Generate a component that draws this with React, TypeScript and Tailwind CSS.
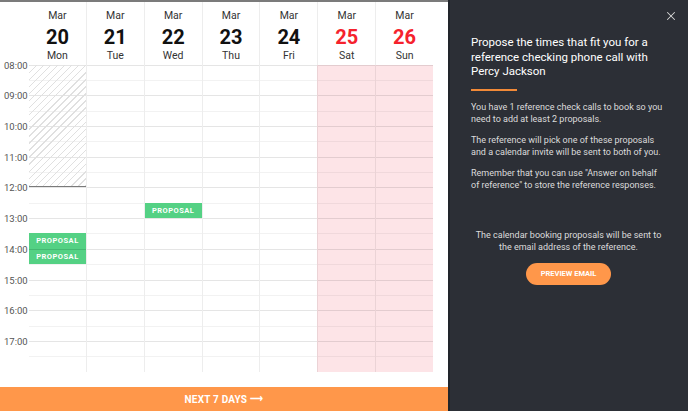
import React from 'react';
import { X } from 'lucide-react';

const days = [
  { month: 'Mar', date: 20, name: 'Mon', weekend: false },
  { month: 'Mar', date: 21, name: 'Tue', weekend: false },
  { month: 'Mar', date: 22, name: 'Wed', weekend: false },
  { month: 'Mar', date: 23, name: 'Thu', weekend: false },
  { month: 'Mar', date: 24, name: 'Fri', weekend: false },
  { month: 'Mar', date: 25, name: 'Sat', weekend: true },
  { month: 'Mar', date: 26, name: 'Sun', weekend: true },
];

const hours = ['08:00', '09:00', '10:00', '11:00', '12:00', '13:00', '14:00', '15:00', '16:00', '17:00'];

const Proposal: React.FC<{ className?: string }> = ({ className = '' }) => (
  <div
    className={`h-[15.36px] bg-[#54d184] flex items-center justify-center text-white font-bold text-[7.5px] tracking-[0.5px] ${className}`}
  >
    PROPOSAL
  </div>
);

const DayColumn: React.FC<{ index: number; weekend: boolean }> = ({ index, weekend }) => (
  <div
    className={`relative flex-1 flex flex-col ${index > 0 ? 'border-l border-black/[0.07]' : ''} ${
      weekend ? 'bg-[#fde4e7]' : 'bg-white'
    }`}
  >
    {Array.from({ length: 20 }).map((_, r) => (
      <div
        key={r}
        className={`flex-1 border-t ${r % 2 === 0 ? 'border-black/[0.1]' : 'border-black/[0.05]'}`}
      />
    ))}

    {index === 0 && (
      <>
        {/* unavailable morning */}
        <div className="absolute left-0 right-0 top-0 h-[122.9px] bg-[repeating-linear-gradient(135deg,#e0e0e0_0px,#e0e0e0_1px,transparent_1px,transparent_5px)] border-b border-[#7a7a7a]" />
        <div className="absolute left-0 right-0 top-[168.9px] flex flex-col">
          <Proposal />
          <Proposal className="border-t border-[#45b872]" />
        </div>
      </>
    )}
    {index === 2 && (
      <div className="absolute left-0 right-0 top-[138.2px]">
        <Proposal />
      </div>
    )}
  </div>
);

export default function App() {
  return (
    <div className="w-[688px] h-[411px] flex overflow-hidden font-[Roboto,'Liberation_Sans',sans-serif]">
      {/* calendar side */}
      <div className="w-[448px] h-full flex flex-col bg-white border-t-2 border-[#7b7b7b]">
        <div className="h-[62.5px] flex pl-[29px] pr-[15px]">
          {days.map((d, i) => (
            <div
              key={d.date}
              className={`flex-1 flex flex-col items-center pt-[7px] ${i > 0 ? 'border-l border-black/[0.07]' : ''}`}
            >
              <span className="text-[10.5px] leading-[14px] text-[#333]">{d.month}</span>
              <span
                className={`text-[20px] leading-[22px] font-bold mt-[3px] ${d.weekend ? 'text-[#f5222d]' : 'text-[#111]'}`}
              >
                {d.date}
              </span>
              <span className="text-[10.5px] leading-[14px] text-[#333] mt-[1px]">{d.name}</span>
            </div>
          ))}
        </div>

        <div className="h-[307.2px] flex pr-[15px]">
          <div className="w-[29px] flex flex-col">
            {hours.map((h) => (
              <div key={h} className="flex-1">
                <span className="block -translate-y-1/2 text-[9.5px] leading-[12px] text-[#555] pl-[4px] pt-[1px]">
                  {h}
                </span>
              </div>
            ))}
          </div>
          <div className="flex-1 flex">
            {days.map((d, i) => (
              <DayColumn key={d.date} index={i} weekend={d.weekend} />
            ))}
          </div>
        </div>

        <div className="flex-1" />

        <button className="h-[24px] w-full bg-[#ff974a] text-white font-bold text-[10px] flex items-center justify-center gap-[3px] tracking-[0.2px]">
          NEXT 7 DAYS <span className="text-[9px]">⟶</span>
        </button>
      </div>

      {/* instructions side */}
      <div className="relative flex-1 h-full bg-[#2c2f36] border-l-2 border-[#22252b] pl-[21px] pr-[22px] pt-[35px]">
        <X className="absolute top-[9px] right-[10px] w-[14px] h-[14px] text-[#d8d8d8]" strokeWidth={1.75} />

        <h2 className="text-[11.5px] leading-[14.5px] text-white font-normal">
          Propose the times that fit you for a reference checking phone call with Percy Jackson
        </h2>
        <div className="w-[46px] h-[2px] bg-[#f28a38] mt-[10px]" />

        <p className="mt-[10px] text-[9px] leading-[12px] text-[#dcdcdc]">
          You have 1 reference check calls to book so you need to add at least 2 proposals.
        </p>
        <p className="mt-[9px] text-[9px] leading-[12px] text-[#dcdcdc]">
          The reference will pick one of these proposals and a calendar invite will be sent to both of you.
        </p>
        <p className="mt-[9px] text-[9px] leading-[12px] text-[#dcdcdc]">
          Remember that you can use "Answer on behalf of reference" to store the reference responses.
        </p>

        <p className="mt-[38px] text-[9px] leading-[12.5px] text-[#dcdcdc] text-center px-[4px]">
          The calendar booking proposals will be sent to the email address of the reference.
        </p>
        <div className="flex justify-center mt-[9px]">
          <button className="w-[85px] h-[22.5px] rounded-full bg-[#ff974a] text-white font-bold text-[7.5px]">
            PREVIEW EMAIL
          </button>
        </div>
      </div>
    </div>
  );
}
